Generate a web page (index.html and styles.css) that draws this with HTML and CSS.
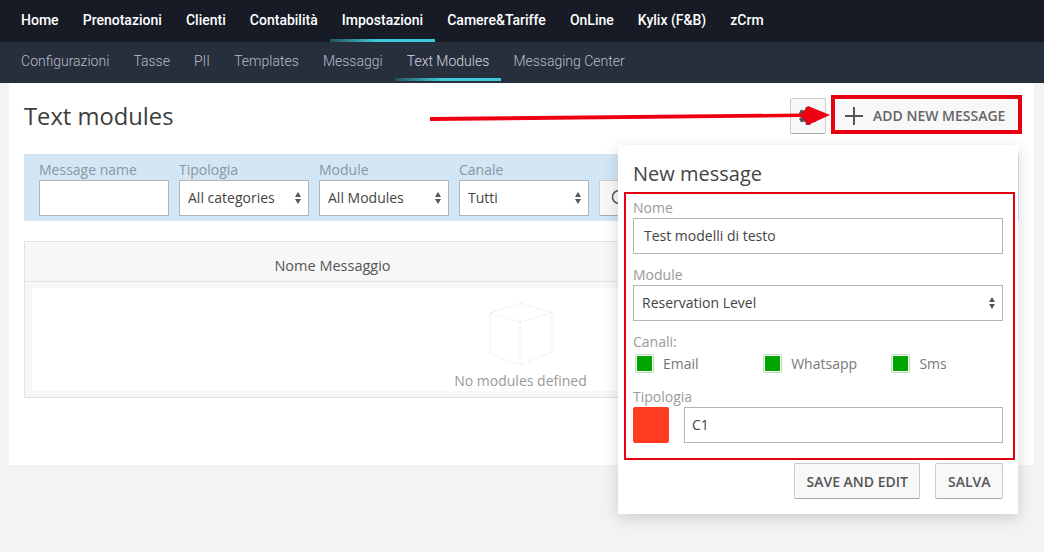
FILE: index.html
```html
<!DOCTYPE html>
<html lang="en">
  <head>
    <meta charset="UTF-8" />
    <meta name="viewport" content="width=device-width, initial-scale=1.0" />
    <title>Text modules</title>
    <link rel="stylesheet" href="styles.css">
  </head>
  <body>
    <nav class="top-nav">
      <a class="nav-item">Home</a>
      <a class="nav-item">Prenotazioni</a>
      <a class="nav-item">Clienti</a>
      <a class="nav-item">Contabilità</a>
      <a class="nav-item active">Impostazioni</a>
      <a class="nav-item">Camere&amp;Tariffe</a>
      <a class="nav-item">OnLine</a>
      <a class="nav-item">Kylix (F&amp;B)</a>
      <a class="nav-item">zCrm</a>
    </nav>
    <nav class="sub-nav">
      <a class="nav-item">Configurazioni</a>
      <a class="nav-item">Tasse</a>
      <a class="nav-item">PII</a>
      <a class="nav-item">Templates</a>
      <a class="nav-item">Messaggi</a>
      <a class="nav-item active">Text Modules</a>
      <a class="nav-item">Messaging Center</a>
    </nav>

    <main class="page">
      <div class="page-head">
        <h1 class="page-title">Text modules</h1>
        <button type="button" class="btn btn-icon">
          <svg width="22" height="22" viewBox="0 0 24 24">
            <path fill="#555" d="M19.4 13c.1-.3.1-.7.1-1s0-.7-.1-1l2.100-1.600c.2-.2.2-.4.1-.6l-2-3.500c-.1-.2-.4-.3-.6-.2l-2.500 1c-.5-.4-1.100-.7-1.700-1l-.4-2.600c0-.3-.2-.4-.5-.4h-4c-.3 0-.5.100-.5.400l-.4 2.600c-.6.300-1.200.600-1.700 1l-2.500-1c-.2-.100-.5 0-.6.200l-2 3.500c-.1.200-.1.400.1.600L4.600 11c-.1.300-.1.700-.1 1s0 .7.100 1l-2.100 1.600c-.2.200-.2.400-.1.600l2 3.500c.1.200.4.300.6.200l2.500-1c.5.400 1.100.700 1.700 1l.4 2.600c0 .3.200.4.500.4h4c.3 0 .5-.1.500-.4l.4-2.600c.6-.3 1.200-.6 1.700-1l2.500 1c.2.100.5 0 .6-.2l2-3.500c.1-.2.100-.4-.1-.6L19.400 13zM12 15.500a3.500 3.500 0 1 1 0-7 3.500 3.500 0 0 1 0 7z"/>
          </svg>
        </button>
        <button type="button" class="btn btn-add">
          <svg width="18" height="18" viewBox="0 0 18 18">
            <path stroke="#555" stroke-width="2" d="M9 0v18M0 9h18"/>
          </svg>
          Add new message
        </button>
      </div>

      <form class="filters">
        <label class="field">
          <span class="field-label">Message name</span>
          <input type="text" class="control" />
        </label>
        <label class="field">
          <span class="field-label">Tipologia</span>
          <span class="select-wrap"><select class="control"><option>All categories</option></select></span>
        </label>
        <label class="field">
          <span class="field-label">Module</span>
          <span class="select-wrap"><select class="control"><option>All Modules</option></select></span>
        </label>
        <label class="field">
          <span class="field-label">Canale</span>
          <span class="select-wrap"><select class="control"><option>Tutti</option></select></span>
        </label>
        <button type="button" class="btn btn-search">
          <svg width="20" height="20" viewBox="0 0 20 20">
            <circle cx="9" cy="9" r="6.500" fill="none" stroke="#555" stroke-width="1.500"/>
            <path stroke="#555" stroke-width="1.500" d="M14 14l5 5"/>
          </svg>
        </button>
      </form>

      <section class="modules">
        <div class="modules-head">
          <span class="modules-col">Nome Messaggio</span>
        </div>
        <div class="modules-body">
          <svg class="empty-box" width="64" height="64" viewBox="0 0 64 64">
            <path fill="none" stroke="#e6e6e6" stroke-dasharray="2 2" d="M1 11L31 1l32 10v39L31 63 1 52zM1 11l30 9 32-9M31 20v43"/>
          </svg>
          <span class="empty-text">No modules defined</span>
        </div>
      </section>
    </main>

    <aside class="popover">
      <h2 class="popover-title">New message</h2>
      <form class="message-form">
        <label class="field">
          <span class="field-label">Nome</span>
          <input type="text" class="control control-wide" value="Test modelli di testo" />
        </label>
        <label class="field">
          <span class="field-label">Module</span>
          <span class="select-wrap"><select class="control control-wide"><option>Reservation Level</option></select></span>
        </label>
        <div class="field">
          <span class="field-label">Canali:</span>
          <div class="channels">
            <span class="channel"><i class="check"></i>Email</span>
            <span class="channel"><i class="check"></i>Whatsapp</span>
            <span class="channel"><i class="check"></i>Sms</span>
          </div>
        </div>
        <div class="field">
          <span class="field-label">Tipologia</span>
          <div class="type-row">
            <i class="swatch"></i>
            <input type="text" class="control control-wide" value="C1" />
          </div>
        </div>
      </form>
      <div class="popover-actions">
        <button type="button" class="btn btn-action">Save and edit</button>
        <button type="button" class="btn btn-action">Salva</button>
      </div>
    </aside>

    <!-- red annotations on the screenshot -->
    <div class="mark mark-add"></div>
    <div class="mark mark-form"></div>
    <svg class="mark-arrow" width="404" height="24" viewBox="0 0 404 24">
      <path fill="#ee0011" d="M0 13L372 9.500 378 2 400 11 378 21 372 13 0 17z"/>
    </svg>
  </body>
</html>
```

FILE: styles.css
```css
* {
  box-sizing: border-box;
}
body {
  margin: 0;
  height: 552px;
  overflow: hidden;
  background-color: #f3f3f3;
  font-family: "Open Sans", sans-serif;
  font-size: 14px;
  color: #555;
}
.top-nav,
.sub-nav {
  display: flex;
  padding-left: 9px;
  font-family: Roboto, sans-serif;
  font-size: 14px;
}
.top-nav {
  height: 42px;
  background-color: #171b26;
  color: #fff;
  font-weight: 500;
}
.sub-nav {
  height: 41px;
  background-color: #272e3c;
  color: #b9bec9;
  font-weight: 300;
}
.nav-item {
  display: flex;
  align-items: center;
  padding: 0 12.050px;
  height: 100%;
  border-bottom: 3px solid transparent;
}
.sub-nav .nav-item {
  height: 39px;
  padding-top: 2px;
  border-bottom-width: 3px;
}
.nav-item.active {
  border-image: linear-gradient(to right, #28505c, #3ccbda 45%) 1;
}
.sub-nav .nav-item.active {
  color: #d5d9e0;
}

.page {
  height: 382px;
  margin: 0 10px 0 9px;
  padding: 15px;
  background-color: #fff;
}
.page-head {
  display: flex;
  align-items: center;
  gap: 10px;
  height: 36px;
}
.page-title {
  margin: 0 auto 0 0;
  font-size: 23.750px;
  font-weight: 400;
  color: #3d3d3d;
}
.btn {
  display: inline-flex;
  align-items: center;
  justify-content: center;
  height: 36px;
  border: 1px solid #ccc;
  border-bottom-color: #aaa;
  border-radius: 2px;
  background-color: #f8f8f8;
  font-family: "Open Sans", sans-serif;
  font-size: 14px;
  font-weight: 600;
  color: #555;
  text-transform: uppercase;
}
.btn-icon {
  width: 36px;
  padding: 0;
}
.btn-add {
  justify-content: flex-start;
  gap: 10px;
  width: 183px;
  padding: 0 0 1px 9px;
  border: none;
  color: #666;
}

.filters {
  display: flex;
  align-items: flex-end;
  gap: 10px;
  height: 67px;
  margin-top: 20px;
  padding: 0 15px 5px;
  background-color: #d2e6f5;
}
.field {
  display: block;
}
.field-label {
  display: block;
  height: 20px;
  line-height: 19px;
  color: #999;
}
.filters .field-label {
  height: 21px;
  line-height: 21px;
  color: #8c979f;
}
.control {
  display: block;
  width: 130px;
  height: 36px;
  padding: 0 8px 2px;
  border: 1px solid #b5b5b5;
  border-radius: 0;
  background-color: #fff;
  font-family: "Open Sans", sans-serif;
  font-size: 14px;
  color: #444;
  appearance: none;
}
.select-wrap {
  display: block;
  position: relative;
}
.select-wrap::before,
.select-wrap::after {
  content: "";
  position: absolute;
  right: 8px;
  border-left: 3px solid transparent;
  border-right: 3px solid transparent;
  pointer-events: none;
}
.select-wrap::before {
  top: 12px;
  border-bottom: 5px solid #555;
}
.select-wrap::after {
  top: 19px;
  border-top: 5px solid #555;
}
.btn-search {
  width: 60px;
  padding: 0 0 0 2px;
  justify-content: flex-start;
  margin-left: 0;
}
.btn-search svg {
  margin-left: 8px;
}

.modules {
  height: 157px;
  margin: 20px 1px 0 0;
  border: 1px solid #e2e2e2;
  background-color: #f7f7f7;
}
.modules-head {
  display: flex;
  height: 40px;
  border-bottom: 1px solid #e4e4e4;
}
.modules-col {
  width: 615px;
  padding-top: 14px;
  text-align: center;
  font-size: 14.500px;
  color: #555;
}
.modules-body {
  display: flex;
  flex-direction: column;
  align-items: center;
  height: 103px;
  margin: 6px 8px 0 7px;
  padding-top: 14px;
  background-color: #fff;
}
.empty-box {
  flex: none;
}
.empty-text {
  margin-top: 5px;
  color: #999;
}

.popover {
  position: absolute;
  left: 618px;
  top: 145px;
  width: 400px;
  height: 369px;
  padding: 15px;
  background-color: #fff;
  box-shadow: 0 4px 14px rgba(0, 0, 0, 0.16);
}
.popover-title {
  margin: 0;
  font-size: 20px;
  line-height: 28px;
  font-weight: 400;
  color: #444;
}
.message-form {
  margin-top: 10px;
}
.message-form .field {
  margin-bottom: 11px;
}
.message-form .field:nth-child(3) {
  margin-bottom: 14px;
}
.message-form .field:last-child {
  margin-bottom: 0;
}
.control-wide {
  width: 100%;
  padding: 0 10px 2px;
}
select.control-wide {
  padding-left: 8px;
}
.channels {
  display: flex;
  margin: 1px 0 0 2px;
}
.channel {
  display: flex;
  flex: none;
  align-items: center;
  gap: 9px;
  width: 128.200px;
  height: 20px;
  color: #777;
}
.check {
  display: block;
  width: 19px;
  height: 19px;
  padding: 1px;
  border: 1px solid #bfe0bf;
  border-radius: 2px;
  background-color: #00a600;
  background-clip: content-box;
}
.type-row {
  display: flex;
  gap: 15px;
}
.swatch {
  flex: none;
  width: 36px;
  height: 36px;
  border-radius: 2px;
  background-color: #ff3b20;
}
.type-row .control {
  flex: 1;
  width: auto;
  padding: 0 7px 2px;
}
.popover-actions {
  display: flex;
  justify-content: flex-end;
  gap: 15px;
  margin-top: 20px;
}
.btn-action {
  padding: 0 11.500px;
}

.mark {
  position: absolute;
  border-style: solid;
  border-color: #e60012;
  pointer-events: none;
}
.mark-add {
  left: 831px;
  top: 95px;
  width: 191px;
  height: 39px;
  border-width: 4px;
}
.mark-form {
  left: 624px;
  top: 192px;
  width: 391px;
  height: 268px;
  border-width: 2px;
}
.mark-arrow {
  position: absolute;
  left: 430px;
  top: 104px;
}
```
